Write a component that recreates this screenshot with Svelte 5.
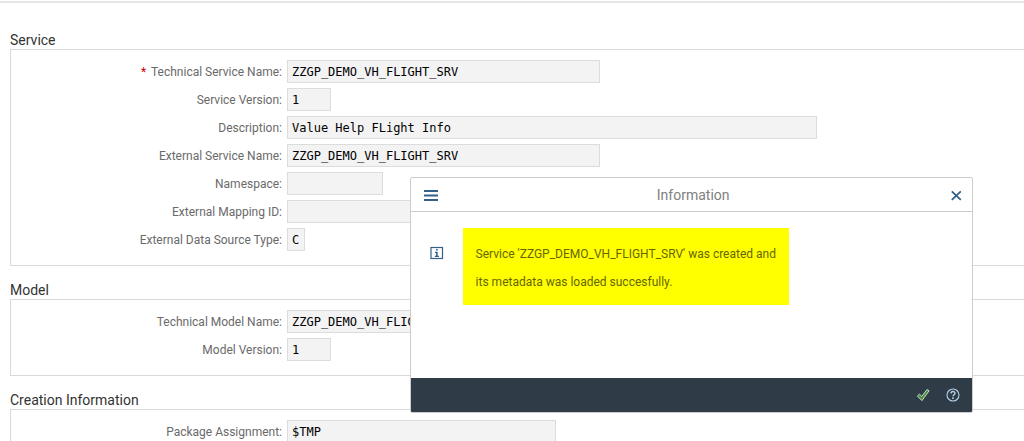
<script>
  let open = true;

  const sections = [
    {
      title: "Service",
      fields: [
        { id: "service-name", label: "Technical Service Name", value: "ZZGP_DEMO_VH_FLIGHT_SRV", width: 313, required: true },
        { id: "service-version", label: "Service Version", value: "1", width: 44 },
        { id: "description", label: "Description", value: "Value Help FLight Info", width: 530 },
        { id: "external-name", label: "External Service Name", value: "ZZGP_DEMO_VH_FLIGHT_SRV", width: 313 },
        { id: "namespace", label: "Namespace", value: "", width: 96 },
        { id: "mapping-id", label: "External Mapping ID", value: "", width: 313 },
        { id: "source-type", label: "External Data Source Type", value: "C", width: 18 },
      ],
    },
    {
      title: "Model",
      fields: [
        { id: "model-name", label: "Technical Model Name", value: "ZZGP_DEMO_VH_FLIGHT_MDL", width: 313 },
        { id: "model-version", label: "Model Version", value: "1", width: 44 },
      ],
    },
    {
      title: "Creation Information",
      fields: [{ id: "package", label: "Package Assignment", value: "$TMP", width: 269 }],
    },
  ];

  function close() {
    open = false;
  }
</script>

<main>
  {#each sections as section}
    <section>
      <h2>{section.title}</h2>
      <div class="group">
        {#each section.fields as field}
          <div class="row">
            <label for={field.id}>
              {#if field.required}<span class="required">*</span>{/if}
              {field.label}:
            </label>
            <input id={field.id} type="text" readonly value={field.value} style="width: {field.width}px" />
          </div>
        {/each}
      </div>
    </section>
  {/each}
</main>

{#if open}
  <div class="dialog" role="dialog" aria-labelledby="dialog-title">
    <header>
      <button aria-label="Menu">
        <svg width="16" height="16" viewBox="0 0 16 16">
          <path d="M1 4h14M1 8.5h14M1 13h14" stroke="#346187" stroke-width="1.8" />
        </svg>
      </button>
      <h1 id="dialog-title">Information</h1>
      <button aria-label="Close" on:click={close}>
        <svg width="16" height="16" viewBox="0 0 16 16">
          <path d="M3.8 4.3l9 8.5M12.8 4.3l-9 8.5" stroke="#346187" stroke-width="1.8" />
        </svg>
      </button>
    </header>
    <div class="content">
      <svg class="info" width="14" height="14" viewBox="0 0 14 14">
        <rect x="1" y="1.5" width="11.5" height="11" fill="none" stroke="#346187" stroke-width="1.2" />
        <path d="M6 3h1.7v1.6h-1.7zM5 5.8h2.7v4h1.3v1.2h-4.2v-1.2h1.3v-2.8h-1.1z" fill="#346187" />
      </svg>
      <p>Service 'ZZGP_DEMO_VH_FLIGHT_SRV' was created and<br />its metadata was loaded succesfully.</p>
    </div>
    <footer>
      <button aria-label="Continue" on:click={close}>
        <svg width="14" height="14" viewBox="0 0 14 14">
          <path d="M1.4 8l2-1.8 2.3 2.2L11.2 1.4l1.9 1.4-7.2 9.8z" fill="#4b8a4c" stroke="#c4e4bc" stroke-linejoin="round" />
        </svg>
      </button>
      <button aria-label="Help">
        <svg width="14" height="14" viewBox="0 0 14 14" fill="none" stroke="#b5d3ec">
          <circle cx="7" cy="7" r="6" stroke-width="1.1" />
          <path d="M5 5.5c0-2.6 4-2.6 4-.2 0 1.4-2 1.5-2 3" stroke-width="1.4" />
          <path d="M7 9.3v1.6" stroke-width="1.5" />
        </svg>
      </button>
    </footer>
  </div>
{/if}

<style>
  :global(body) {
    margin: 0;
    overflow: hidden;
    background: #fff;
    font-family: Roboto, "Liberation Sans", sans-serif;
    font-size: 12px;
    color: #6a6a6a;
  }
  main {
    box-sizing: border-box;
    height: 100vh;
    overflow: hidden;
    margin-top: 1px;
    padding: 13px 0 0 10px;
    border-top: 2px solid #e5e5e5;
  }
  h1,
  h2,
  p {
    margin: 0;
    font-weight: 400;
  }
  h2 {
    padding-top: 15px;
    font-size: 14px;
    line-height: 18px;
    color: #333;
  }
  .group {
    display: flex;
    flex-direction: column;
    gap: 5px;
    padding: 10px 0 14px;
    border: 1px solid #d9d9d9;
    border-right: 0;
  }
  .row {
    display: grid;
    grid-template-columns: 271px 1fr;
    gap: 5px;
    align-items: center;
  }
  label {
    text-align: right;
  }
  .required {
    margin-right: 2px;
    color: #c00;
  }
  input {
    box-sizing: border-box;
    height: 23px;
    padding: 0 4px;
    border: 1px solid #dcdcdc;
    border-radius: 0;
    background: #f3f3f3;
    font-family: "DejaVu Sans Mono", monospace;
    font-size: 12px;
    color: #000;
    outline: none;
  }
  button {
    display: flex;
    padding: 0;
    border: 0;
    background: none;
    cursor: pointer;
  }
  .dialog {
    position: fixed;
    top: 177px;
    left: 40%;
    width: 55%;
    box-sizing: border-box;
    border: 1px solid #ccc;
    border-radius: 2px;
    background: #fff;
    overflow: hidden;
  }
  header {
    display: flex;
    align-items: center;
    justify-content: space-between;
    height: 34px;
    padding: 1px 8px 0 12px;
    box-sizing: border-box;
    border-bottom: 1px solid #ccc;
  }
  h1 {
    font-size: 14px;
    color: #808080;
  }
  .content {
    display: flex;
    gap: 19px;
    padding: 16px 19px 73px;
  }
  .info {
    margin-top: 18px;
  }
  .content p {
    padding: 12px 13px 9px;
    background: #ff0;
    line-height: 28px;
    color: #660;
  }
  footer {
    display: flex;
    align-items: center;
    justify-content: flex-end;
    gap: 16px;
    height: 34px;
    padding: 0 12px;
    background: #2f3c48;
  }
</style>
